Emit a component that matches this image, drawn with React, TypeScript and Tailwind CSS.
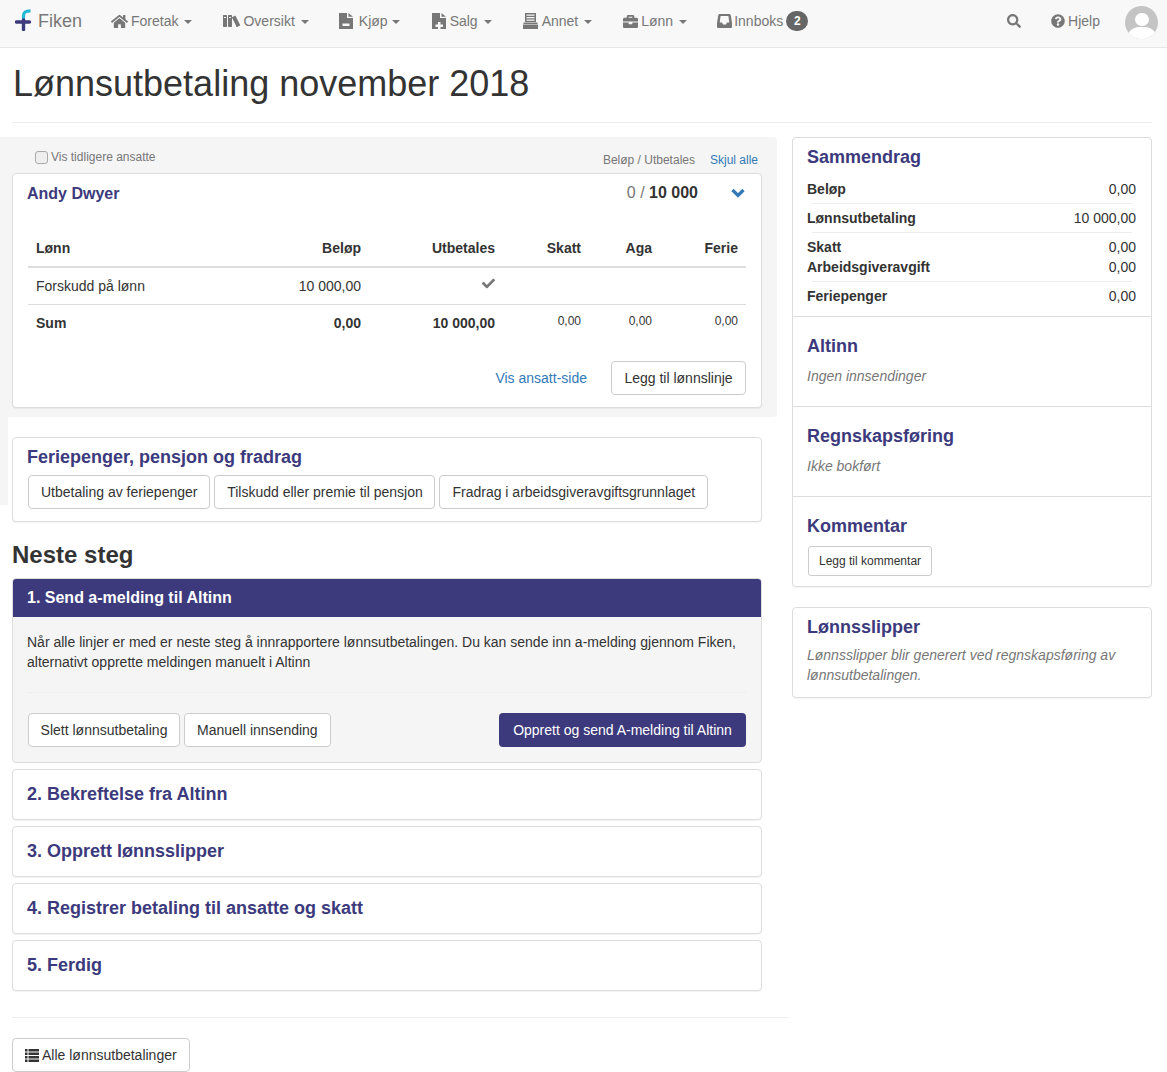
import type { ReactNode } from "react";
import { FaBriefcase, FaCheck, FaHome, FaQuestionCircle, FaSearch } from "react-icons/fa";
import { ImBooks } from "react-icons/im";

function Logo() {
  return (
    <svg width="17" height="22" viewBox="0 0 17 22" className="mr-[6px] -mt-[3px]">
      <path d="M8.500 14V7C8.500 3.500 10.500 1.800 15.500 1.800" fill="none" stroke="#22b8d6" strokeWidth="3.200" />
      <path d="M8.500 20.500V11" fill="none" stroke="#3c3a7c" strokeWidth="3.400" strokeLinecap="round" />
      <path d="M1.500 13H14.500" fill="none" stroke="#3c3a7c" strokeWidth="3.400" strokeLinecap="round" />
    </svg>
  );
}

function FileIcon({ plus }: { plus?: boolean }) {
  return (
    <svg width="15" height="16" viewBox="0 0 15 16" fill="#777">
      <path d="M0 0h8v5h6v11H0z" />
      <path d="M9.500 0L14 3.800H9.500z" />
      {plus ? (
        <path d="M6 9h2.500v2.500H11V14H8.500v2H6v-2H3.500v-2.500H6z" fill="#f8f8f8" />
      ) : (
        <path d="M3.500 10.500h7v2.500h-7z" fill="#f8f8f8" />
      )}
    </svg>
  );
}

function TrayIcon() {
  return (
    <svg width="17" height="16" viewBox="0 0 17 16" fill="#777">
      <path d="M3 0h11v9H3zM4.500 1.500v1.200h8V1.500zm0 2.500v1.200h8V4zm0 2.500v1.200h8V6.500z" fillRule="evenodd" />
      <path d="M1.500 9.500h14V11h-14zM1 11.500h15V16H1z" />
    </svg>
  );
}

function InboxIcon() {
  return (
    <svg width="15" height="14" viewBox="0 0 15 14" fill="#777">
      <path
        d="M3 0h9c1 0 1.500.5 1.800 1.500L15 9v3.500c0 1-.5 1.500-1.500 1.500h-12C.5 14 0 13.500 0 12.500V9l1.200-7.500C1.500.5 2 0 3 0zm.6 2L2.700 8.500H5L6 10.500h3l1-2h2.300L11.400 2z"
        fillRule="evenodd"
      />
    </svg>
  );
}

function ListIcon() {
  return (
    <svg width="14" height="13" viewBox="0 0 14 13" fill="#333">
      <path d="M0 0h2.500v2.500H0zM3.500 0H14v2.500H3.500zM0 3.500h2.500V6H0zM3.500 3.500H14V6H3.500zM0 7h2.500v2.500H0zM3.500 7H14v2.500H3.500zM0 10.500h2.500V13H0zM3.500 10.500H14V13H3.500z" />
    </svg>
  );
}

function Chevron() {
  return (
    <svg width="14" height="10" viewBox="0 0 14 10" className="ml-[33px] mr-[1px]">
      <path d="M1.500 2L7 7.500 12.500 2" fill="none" stroke="#337ab7" strokeWidth="3.200" />
    </svg>
  );
}

type NavItemProps = {
  icon: ReactNode;
  label: string;
  caret?: boolean;
  iconGap?: string;
  caretGap?: string;
  className?: string;
  children?: ReactNode;
};

function NavItem({ icon, label, caret = true, iconGap = "mr-[3px]", caretGap = "ml-[5px]", className = "pr-[15px]", children }: NavItemProps) {
  return (
    <a className={`flex items-center pl-[15px] text-[14px] text-[#777] h-[42px] shrink-0 ${className}`}>
      <span className={`flex items-center ${iconGap}`}>{icon}</span>
      {label}
      {caret && <span className={`mt-[2px] border-x-[4px] border-t-[4px] border-x-transparent border-t-[#777] ${caretGap}`} />}
      {children}
    </a>
  );
}

function NavBar() {
  return (
    <nav className="flex items-start h-[48px] bg-[#f8f8f8] border-b border-[#e7e7e7] pr-[9px]">
      <a className="flex items-center pl-[15px] pr-[14px] h-[42px] text-[18px] text-[#777]">
        <Logo />
        Fiken
      </a>
      <NavItem icon={<FaHome size={17} color="#777" />} label="Foretak" caretGap="ml-[6px]" className="pr-[16px]" />
      <NavItem icon={<ImBooks size={18} color="#777" />} label="Oversikt" iconGap="mr-[2px]" caretGap="ml-[6px]" />
      <NavItem icon={<FileIcon />} label="Kjøp" iconGap="mr-[5px]" caretGap="ml-[4px]" />
      <NavItem icon={<FileIcon plus />} label="Salg" iconGap="ml-[2px] mr-[3px]" caretGap="ml-[6px]" />
      <NavItem icon={<TrayIcon />} label="Annet" caretGap="ml-[6px]" className="pr-[16px]" />
      <NavItem icon={<FaBriefcase size={15} color="#777" />} label="Lønn" iconGap="mr-[3px]" caretGap="ml-[6px]" />
      <NavItem icon={<InboxIcon />} label="Innboks" caret={false} iconGap="mr-[2px]">
        <span className="ml-[3px] min-w-[22px] h-[20px] rounded-full bg-[#666] text-white text-[12px] font-bold flex items-center justify-center">2</span>
      </NavItem>
      <div className="ml-auto flex items-center h-[42px]">
        <FaSearch size={14} color="#777" />
        <a className="ml-[30px] flex items-center text-[14px] text-[#777]">
          <FaQuestionCircle size={14} color="#777" className="mr-[3px]" />
          Hjelp
        </a>
        <div className="ml-[25px] mt-[3px] w-[33px] h-[33px] rounded-full bg-[#c4c4c4] overflow-hidden flex flex-col items-center">
          <div className="mt-[7px] w-[14px] h-[16px] rounded-full bg-white" />
          <div className="mt-[1px] w-[30px] h-[16px] rounded-t-full bg-white" />
        </div>
      </div>
    </nav>
  );
}

function Button({ children, className = "" }: { children: ReactNode; className?: string }) {
  return (
    <button className={`h-[34px] px-[12px] border border-[#ccc] rounded-[4px] bg-white text-[14px] text-[#333] whitespace-nowrap ${className}`}>
      {children}
    </button>
  );
}

function EmployeeCard() {
  return (
    <div className="bg-white border border-[#ddd] rounded-[4px] h-[235px] px-[15px] shadow-[0_1px_1px_rgba(0,0,0,0.05)]">
      <div className="flex items-center h-[38px]">
        <h3 className="-ml-px pt-[2px] text-[16px] font-bold text-[#3c3a7c]">Andy Dwyer</h3>
        <div className="ml-auto text-[16px] text-[#777]">
          0 / <b className="text-[#333]">10 000</b>
        </div>
        <Chevron />
      </div>
      <table className="w-[718px] table-fixed mt-[17px] text-[14px] text-[#333]">
        <colgroup>
          <col className="w-[221px]" />
          <col className="w-[120px]" />
          <col className="w-[134px]" />
          <col className="w-[86px]" />
          <col className="w-[71px]" />
          <col className="w-[86px]" />
        </colgroup>
        <thead>
          <tr className="h-[38px] border-b-2 border-[#ddd]">
            <th className="text-left px-[8px] pt-[2px] font-bold">Lønn</th>
            <th className="text-right px-[8px] pt-[2px] font-bold">Beløp</th>
            <th className="text-right px-[8px] pt-[2px] font-bold">Utbetales</th>
            <th className="text-right px-[8px] pt-[2px] font-bold">Skatt</th>
            <th className="text-right px-[8px] pt-[2px] font-bold">Aga</th>
            <th className="text-right px-[8px] pt-[2px] font-bold">Ferie</th>
          </tr>
        </thead>
        <tbody>
          <tr className="h-[37px] border-b border-[#ddd]">
            <td className="px-[8px] pt-[2px]">Forskudd på lønn</td>
            <td className="text-right px-[8px] pt-[2px]">10 000,00</td>
            <td className="px-[8px]">
              <div className="flex justify-end -mt-[5px]">
                <FaCheck size={13} color="#777" />
              </div>
            </td>
            <td />
            <td />
            <td />
          </tr>
          <tr className="h-[36px] font-bold">
            <td className="px-[8px] pt-[2px]">Sum</td>
            <td className="text-right px-[8px] pt-[2px]">0,00</td>
            <td className="text-right px-[8px] pt-[2px]">10 000,00</td>
            <td className="text-right px-[8px] text-[12px] font-normal align-top pt-[7px]">0,00</td>
            <td className="text-right px-[8px] text-[12px] font-normal align-top pt-[7px]">0,00</td>
            <td className="text-right px-[8px] text-[12px] font-normal align-top pt-[7px]">0,00</td>
          </tr>
        </tbody>
      </table>
      <div className="flex items-center justify-end mt-[21px]">
        <a className="text-[14px] text-[#337ab7] mr-[24px]">Vis ansatt-side</a>
        <Button className="w-[135px] !px-0">Legg til lønnslinje</Button>
      </div>
    </div>
  );
}

function StepRow({ title }: { title: string }) {
  return (
    <div className="h-[51px] flex items-center pl-[14px] pr-[15px] bg-white border border-[#ddd] rounded-[4px] text-[18px] font-bold text-[#3c3a7c] shadow-[0_1px_1px_rgba(0,0,0,0.05)]">
      {title}
    </div>
  );
}

function LeftColumn() {
  return (
    <div className="relative w-[777px] shrink-0">
      {/* grey strip that runs on below the employee panel in the screenshot */}
      <div className="absolute left-0 top-0 w-[8px] h-[368px] bg-[#f5f5f5]" />
      <div className="bg-[#f5f5f5] pl-[12px] pr-[15px] h-[280px] rounded-r-[4px]">
        <div className="flex items-center h-[36px] pt-[4px] text-[12px] text-[#777]">
          <span className="w-[13px] h-[13px] ml-[23px] mr-[3px] border border-[#aaa] rounded-[3px] bg-[#eee]" />
          Vis tidligere ansatte
          <span className="ml-auto mt-[6px]">Beløp / Utbetales</span>
          <a className="ml-[15px] mr-[4px] mt-[6px] text-[#337ab7]">Skjul alle</a>
        </div>
        <EmployeeCard />
      </div>
      <div className="pl-[12px] pr-[15px]">
        <div className="mt-[20px] h-[85px] bg-white border border-[#ddd] rounded-[4px] px-[15px] shadow-[0_1px_1px_rgba(0,0,0,0.05)]">
          <h3 className="-ml-px text-[18px] leading-[20px] font-bold text-[#3c3a7c] mt-[9px]">Feriepenger, pensjon og fradrag</h3>
          <div className="flex gap-[4px] mt-[8px]">
            <Button>Utbetaling av feriepenger</Button>
            <Button className="w-[221px] !px-0">Tilskudd eller premie til pensjon</Button>
            <Button>Fradrag i arbeidsgiveravgiftsgrunnlaget</Button>
          </div>
        </div>
        <h2 className="text-[24px] leading-[26px] font-bold text-[#333] mt-[20px]">Neste steg</h2>
        <div className="mt-[10px] h-[185px] bg-[#f5f5f5] border border-[#ddd] rounded-[4px] overflow-hidden">
          <div className="h-[38px] bg-[#3c3a7c] px-[14px] flex items-center text-[16px] font-bold text-white">
            1. Send a-melding til Altinn
          </div>
          <div className="px-[15px] pt-[15px] text-[14px] leading-[20px] text-[#333]">
            <p className="-ml-px">
              Når alle linjer er med er neste steg å innrapportere lønnsutbetalingen. Du kan sende inn a-melding gjennom Fiken,
              alternativt opprette meldingen manuelt i Altinn
            </p>
            <div className="mt-[20px] border-t border-[#eee]" />
            <div className="flex gap-[4px] mt-[20px]">
              <Button className="w-[152px] !px-0">Slett lønnsutbetaling</Button>
              <Button>Manuell innsending</Button>
              <button className="ml-auto w-[247px] h-[34px] rounded-[4px] bg-[#3c3a7c] text-[14px] text-white">
                Opprett og send A-melding til Altinn
              </button>
            </div>
          </div>
        </div>
        <div className="mt-[6px] flex flex-col gap-[6px]">
          <StepRow title="2. Bekreftelse fra Altinn" />
          <StepRow title="3. Opprett lønnsslipper" />
          <StepRow title="4. Registrer betaling til ansatte og skatt" />
          <StepRow title="5. Ferdig" />
        </div>
        <div className="mt-[26px] border-t border-[#eee] mr-[-27px]" />
        <Button className="mt-[20px] flex items-center gap-[3px]">
          <ListIcon />
          Alle lønnsutbetalinger
        </Button>
      </div>
    </div>
  );
}

function SummaryRow({ label, value }: { label: string; value: string }) {
  return (
    <div className="flex justify-between text-[14px] leading-[20px] text-[#333]">
      <b className="-ml-px">{label}</b>
      <span>{value}</span>
    </div>
  );
}

function SideSection({ title, children }: { title: string; children: ReactNode }) {
  return (
    <div className="h-[90px] border-t border-[#ddd] px-[15px] pt-[19px]">
      <h3 className="-ml-px text-[18px] leading-[20px] font-bold text-[#3c3a7c]">{title}</h3>
      {children}
    </div>
  );
}

function RightColumn() {
  return (
    <div className="w-[360px] ml-[15px] shrink-0">
      <div className="bg-white border border-[#ddd] rounded-[4px] shadow-[0_1px_1px_rgba(0,0,0,0.05)]">
        <div className="h-[178px] px-[15px] pt-[9px]">
          <h3 className="-ml-px text-[18px] leading-[20px] font-bold text-[#3c3a7c]">Sammendrag</h3>
          <div className="mt-[12px]">
            <SummaryRow label="Beløp" value="0,00" />
            <div className="my-[4px] mx-[4px] border-t border-[#eee]" />
            <SummaryRow label="Lønnsutbetaling" value="10 000,00" />
            <div className="my-[4px] mx-[4px] border-t border-[#eee]" />
            <SummaryRow label="Skatt" value="0,00" />
            <SummaryRow label="Arbeidsgiveravgift" value="0,00" />
            <div className="my-[4px] mx-[4px] border-t border-[#eee]" />
            <SummaryRow label="Feriepenger" value="0,00" />
          </div>
        </div>
        <SideSection title="Altinn">
          <p className="-ml-px mt-[10px] text-[14px] leading-[20px] italic text-[#777]">Ingen innsendinger</p>
        </SideSection>
        <SideSection title="Regnskapsføring">
          <p className="-ml-px mt-[10px] text-[14px] leading-[20px] italic text-[#777]">Ikke bokført</p>
        </SideSection>
        <SideSection title="Kommentar">
          <button className="mt-[10px] h-[30px] px-[10px] border border-[#ccc] rounded-[3px] bg-white text-[12px] text-[#333]">
            Legg til kommentar
          </button>
        </SideSection>
      </div>
      <div className="mt-[20px] h-[91px] bg-white border border-[#ddd] rounded-[4px] px-[15px] pt-[9px] shadow-[0_1px_1px_rgba(0,0,0,0.05)]">
        <h3 className="-ml-px text-[18px] leading-[20px] font-bold text-[#3c3a7c]">Lønnsslipper</h3>
        <p className="-ml-px mt-[8px] text-[14px] leading-[20px] italic text-[#777]">
          Lønnsslipper blir generert ved regnskapsføring av lønnsutbetalingen.
        </p>
      </div>
    </div>
  );
}

export default function App() {
  return (
    <div className="font-['Liberation_Sans',Arial,sans-serif] text-[#333] bg-white w-[1167px] h-[1072px] overflow-hidden">
      <NavBar />
      <div className="ml-[12px] mr-[15px] h-[75px] border-b border-[#eee]">
        <h1 className="ml-px text-[36px] leading-[40px] text-[#333] pt-[16px]">Lønnsutbetaling november 2018</h1>
      </div>
      <div className="flex mt-[14px]">
        <LeftColumn />
        <RightColumn />
      </div>
    </div>
  );
}
